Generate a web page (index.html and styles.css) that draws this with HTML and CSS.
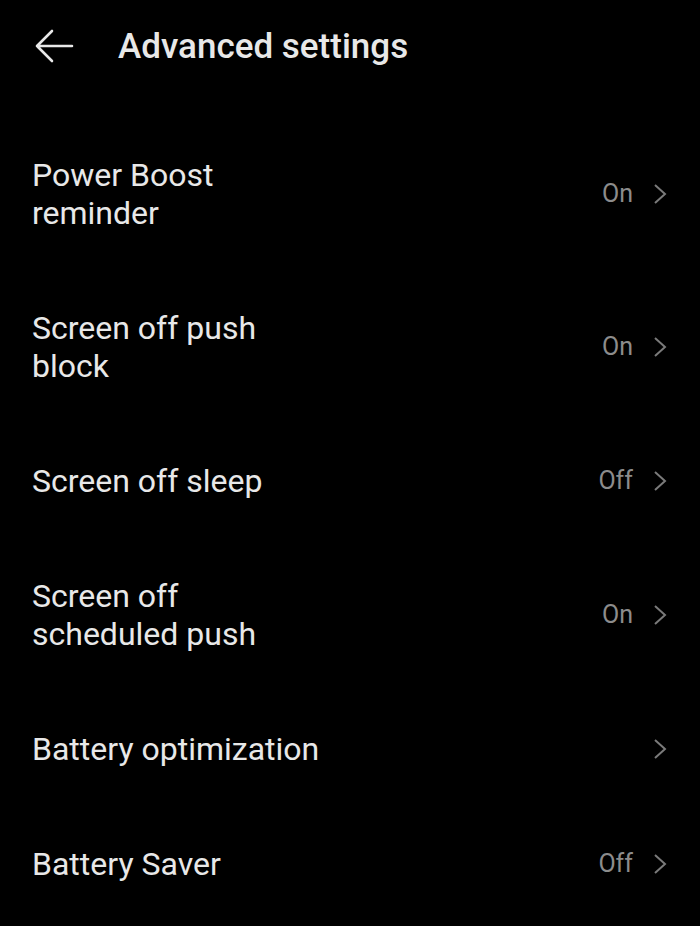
FILE: index.html
```html
<!DOCTYPE html>
<html>
<head>
	<title>Advanced settings</title>
	<link rel="stylesheet" href="styles.css">
</head>
<body>
	<div class="header">
		<svg class="back" width="40" height="34" viewBox="0 0 40 34">
			<path d="M38 17H3M18 2L3 17l15 15" fill="none" stroke="#e8e8e8" stroke-width="2.6" stroke-linecap="round" stroke-linejoin="round"/>
		</svg>
		<h1>Advanced settings</h1>
	</div>

	<div class="list">
		<div class="row tall">
			<div class="label">Power Boost<br>reminder</div>
			<span class="value">On</span>
			<svg class="chev" width="14" height="22" viewBox="0 0 14 22"><path d="M2 2l10 9-10 9" fill="none" stroke="#7a7a7a" stroke-width="2"/></svg>
		</div>
		<div class="row tall">
			<div class="label">Screen off push<br>block</div>
			<span class="value">On</span>
			<svg class="chev" width="14" height="22" viewBox="0 0 14 22"><path d="M2 2l10 9-10 9" fill="none" stroke="#7a7a7a" stroke-width="2"/></svg>
		</div>
		<div class="row">
			<div class="label">Screen off sleep</div>
			<span class="value">Off</span>
			<svg class="chev" width="14" height="22" viewBox="0 0 14 22"><path d="M2 2l10 9-10 9" fill="none" stroke="#7a7a7a" stroke-width="2"/></svg>
		</div>
		<div class="row tall">
			<div class="label">Screen off<br>scheduled push</div>
			<span class="value">On</span>
			<svg class="chev" width="14" height="22" viewBox="0 0 14 22"><path d="M2 2l10 9-10 9" fill="none" stroke="#7a7a7a" stroke-width="2"/></svg>
		</div>
		<div class="row">
			<div class="label">Battery optimization</div>
			<svg class="chev" width="14" height="22" viewBox="0 0 14 22"><path d="M2 2l10 9-10 9" fill="none" stroke="#7a7a7a" stroke-width="2"/></svg>
		</div>
		<div class="row">
			<div class="label">Battery Saver</div>
			<span class="value">Off</span>
			<svg class="chev" width="14" height="22" viewBox="0 0 14 22"><path d="M2 2l10 9-10 9" fill="none" stroke="#7a7a7a" stroke-width="2"/></svg>
		</div>
	</div>
</body>
</html>
```

FILE: styles.css
```css
body {
	margin: 0;
	background-color: #000000;
	color: #e8e8e8;
	font-family: Roboto, "Noto Sans", sans-serif;
}
.header {
	height: 92px;
	display: flex;
	align-items: center;
	padding-left: 34px;
}
.back {
	display: block;
}
h1 {
	margin: 0 0 0 44px;
	font-size: 35px;
	font-weight: 500;
}
.list {
	padding-top: 25px;
}
.row {
	height: 115px;
	display: flex;
	align-items: center;
	padding: 0 33px 0 32px;
	box-sizing: border-box;
}
.row.tall {
	height: 153px;
}
.label {
	flex: 1;
	font-size: 32px;
	line-height: 38px;
}
.value {
	color: #8c8c8c;
	font-size: 25px;
	margin-right: 20px;
}
.chev {
	display: block;
}
```
